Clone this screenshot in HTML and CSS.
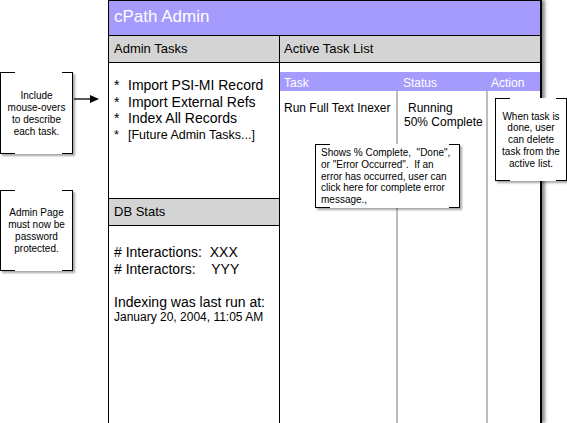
FILE: index.html
```html
<!DOCTYPE html>
<html>
<head>
<meta charset="utf-8">
<link rel="stylesheet" href="styles.css">
</head>
<body>
<div class="page">
  <div class="side">
    <div class="note-row">
      <div class="note note-left note1">Include<br>mouse-overs<br>to describe<br>each task.</div>
      <svg class="arrow" width="26" height="10" viewBox="0 0 26 10"><line x1="0" y1="5" x2="18" y2="5" stroke="#000" stroke-width="1.3"/><polygon points="16,1 25,5 16,9" fill="#000"/></svg>
    </div>
    <div class="note note-left note2">Admin Page<br>must now be<br>password<br>protected.</div>
  </div>

  <div class="frame">
    <div class="title">cPath Admin</div>
    <div class="cols">
      <div class="leftcol">
        <div class="bar">Admin Tasks</div>
        <div class="tasks">
          <div class="task"><span class="bul">*</span>Import PSI-MI Record</div>
          <div class="task"><span class="bul">*</span>Import External Refs</div>
          <div class="task"><span class="bul">*</span>Index All Records</div>
          <div class="task future"><span class="bul">*</span>[Future Admin Tasks...]</div>
        </div>
        <div class="bar bar-db">DB Stats</div>
        <div class="stats">
          <div class="stat">#&nbsp;Interactions:&nbsp;&nbsp;XXX</div>
          <div class="stat">#&nbsp;Interactors:&nbsp;&nbsp;&nbsp;&nbsp;YYY</div>
          <div class="indexing">Indexing was last run at:</div>
          <div class="date">January 20, 2004, 11:05 AM</div>
        </div>
      </div>
      <div class="rightcol">
        <div class="bar bar-r">Active Task List</div>
        <div class="thead">
          <div class="c1">Task</div>
          <div class="c2">Status</div>
          <div class="c3">Action</div>
        </div>
        <div class="tbody">
          <div class="c1">Run Full Text Inexer</div>
          <div class="c2"><span class="running">Running</span><br>50% Complete</div>
          <div class="c3"></div>
        </div>
      </div>
    </div>
  </div>

  <div class="note note3">Shows % Complete,&nbsp; "Done",<br>or "Error Occurred".&nbsp; If an<br>error has occurred, user can<br>click here for complete error<br>message.,</div>
  <div class="note note4">When task is<br>done, user<br>can delete<br>task from the<br>active list.</div>
</div>
</body>
</html>
```

FILE: styles.css
```css
html, body {
  margin: 0;
  padding: 0;
  background: #fff;
  overflow: hidden;
}
body {
  font-family: "Liberation Sans", Arial, Helvetica, sans-serif;
  color: #000;
}
.page {
  position: relative;
  width: 567px;
  height: 423px;
  display: flex;
  align-items: flex-start;
  overflow: hidden;
}

/* annotation notes */
.note {
  box-sizing: border-box;
  background:
    linear-gradient(#000, #000) left top / 14px 1px no-repeat,
    linear-gradient(#000, #000) right top / 10px 1px no-repeat,
    linear-gradient(#000, #000) left bottom / 14px 1px no-repeat,
    linear-gradient(#000, #000) right bottom / 10px 1px no-repeat,
    #fff;
  border-left: 1px solid #000;
  border-right: 1px solid #000;
  box-shadow: 2px 2px 2px rgba(0, 0, 0, 0.35);
  font-size: 10px;
  line-height: 11.8px;
}
.note-left {
  width: 73px;
  display: flex;
  align-items: center;
  justify-content: center;
  text-align: center;
}
.side {
  width: 108px;
  flex: none;
  display: flex;
  flex-direction: column;
}
.note-row {
  margin-top: 72px;
  display: flex;
  align-items: flex-start;
}
.note1 {
  height: 82px;
  padding-top: 2px;
}
.arrow {
  margin-top: 22px;
  margin-left: 1px;
  flex: none;
}
.note2 {
  margin-top: 36px;
  height: 81px;
  padding-top: 1px;
}
.note3 {
  position: absolute;
  left: 315px;
  top: 144px;
  width: 145px;
  height: 64px;
  padding: 3px 0 0 5px;
}
.note4 {
  position: absolute;
  left: 495px;
  top: 98px;
  width: 72px;
  height: 83px;
  display: flex;
  align-items: center;
  justify-content: center;
  text-align: center;
  padding-top: 1px;
}

/* main frame */
.frame {
  flex: none;
  box-sizing: border-box;
  width: 434px;
  height: 423px;
  border-top: 1px solid #000;
  border-left: 1px solid #000;
  border-right: 2px solid #000;
  box-shadow: 3px 0 3px rgba(0, 0, 0, 0.45);
  display: flex;
  flex-direction: column;
}
.title {
  height: 34px;
  background: #a49bfd;
  color: #fff;
  font-size: 17px;
  line-height: 32px;
  padding-left: 5px;
  border-bottom: 1px solid #000;
}
.cols {
  flex: 1;
  display: flex;
}
.leftcol {
  width: 170px;
  border-right: 1px solid #000;
  display: flex;
  flex-direction: column;
}
.rightcol {
  flex: 1;
  display: flex;
  flex-direction: column;
}
.bar {
  height: 26px;
  background: #d4d4d4;
  border-bottom: 1px solid #000;
  font-size: 13px;
  line-height: 25px;
  padding-left: 5px;
}
.bar-r {
  padding-left: 4px;
}
.bar-db {
  border-top: 1px solid #000;
  height: 26px;
}
.tasks {
  height: 121px;
  padding: 14px 0 0 5px;
}
.task {
  display: flex;
  font-size: 14px;
  line-height: 16.5px;
}
.bul {
  width: 14px;
  flex: none;
}
.future {
  font-size: 12.5px;
}
.stats {
  flex: 1;
  padding: 18px 0 0 5px;
}
.stat {
  font-size: 14px;
  line-height: 16.5px;
}
.indexing {
  margin-top: 17px;
  font-size: 14px;
  line-height: 16px;
}
.date {
  font-size: 12px;
  line-height: 14px;
}

/* task table */
.thead {
  margin-top: 9px;
  height: 19px;
  background: #a49bfd;
  color: #fff;
  font-size: 12px;
  line-height: 14px;
  display: flex;
  align-items: flex-end;
  padding-bottom: 1px;
  box-sizing: border-box;
}
.tbody {
  flex: 1;
  display: flex;
  font-size: 12px;
  line-height: 14px;
}
.c1 {
  width: 116px;
  padding-left: 4px;
  box-sizing: border-box;
}
.c2 {
  width: 90px;
  border-left: 2px solid #bdbdbd;
  padding-left: 5px;
  box-sizing: border-box;
}
.c3 {
  flex: 1;
  border-left: 2px solid #bdbdbd;
  padding-left: 3px;
}
.thead .c2, .thead .c3 {
  border-left-color: transparent;
}
.tbody .c1, .tbody .c2 {
  padding-top: 10px;
}
.tbody .c2 {
  padding-left: 6px;
}
.running {
  padding-left: 4px;
}
```
